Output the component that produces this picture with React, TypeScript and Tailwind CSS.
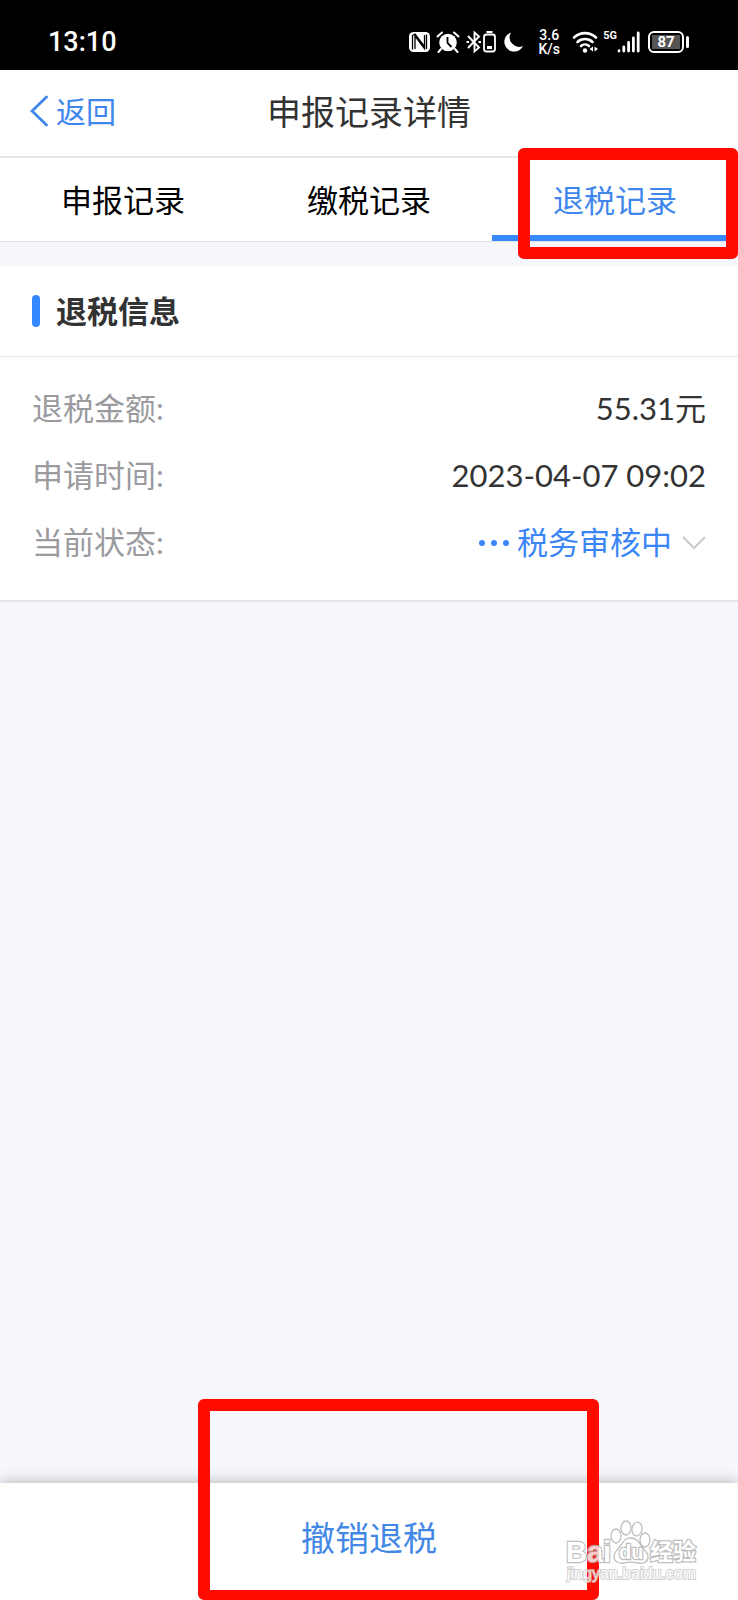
import {useState} from "react";
import {twMerge} from "tailwind-merge";

const tabs = ["申报记录", "缴税记录", "退税记录"];

function StatusIcons() {
    return (
        <div className="flex items-center text-white">
            <svg width="21" height="22" viewBox="0 0 21 22" aria-hidden="true">
                <rect x="0" y="1" width="21" height="20" rx="4.5" fill="white"/>
                <path d="M6 18V5l9.5 12.5V4M3.5 18.5v-14L6 3l9.5 12.5M17.5 3.5V18" fill="none" stroke="black" strokeWidth="1.3"/>
            </svg>
            <svg className="ml-1.5" width="24" height="22" viewBox="0 0 24 22" aria-hidden="true">
                <circle cx="12" cy="11.5" r="8.8" fill="white"/>
                <path d="M1.5 5.5 6 1.5M22.5 5.5 18 1.5M5 18l-2.5 3M19 18l2.5 3" stroke="white" strokeWidth="2" strokeLinecap="round"/>
                <path d="M11.5 6v6l4 4" fill="none" stroke="black" strokeWidth="1.8"/>
            </svg>
            <svg className="ml-1.5" width="31" height="24" viewBox="0 0 31 24" fill="none" stroke="white" aria-hidden="true">
                <path d="M2 6 13 17.5l-4.5 4v-19l4.5 4L2 18" strokeWidth="1.9"/>
                <path d="M.5 12H3M12.5 12H15" strokeWidth="2"/>
                <rect x="18" y="4.5" width="11" height="17" rx="2.5" strokeWidth="1.8"/>
                <path d="M20.5 2h6" strokeWidth="2"/>
                <path d="M21 17.5h5" strokeWidth="3"/>
            </svg>
            <svg className="ml-1.5" width="21" height="22" viewBox="0 0 21 22" aria-hidden="true">
                <path d="M8 1.500a9.800 9.800 0 1 0 12 13.500A9.500 9.500 0 0 1 8 1.500z" fill="white"/>
            </svg>
            <div className="ml-3 w-[26px] text-center text-[14px] leading-[14px] font-medium">
                <p>3.6</p>
                <p>K/s</p>
            </div>
            <svg className="ml-2.5" width="27" height="22" viewBox="0 0 27 22" fill="none" stroke="white" aria-hidden="true">
                <path d="M2 6.5a16 16 0 0 1 22 0M5.5 11a11 11 0 0 1 15 0M9 15a6 6 0 0 1 8 0" strokeWidth="2.6" strokeLinecap="round"/>
                <circle cx="13" cy="19.5" r="2.2" fill="white" stroke="none"/>
                <path d="M21 15.5v5L17.5 18zM22.5 15.5v5L26 18z" fill="white" stroke="none"/>
            </svg>
            <span className="ml-1 self-start text-[11px] leading-[16px] font-bold">5G</span>
            <svg width="23" height="22" viewBox="0 0 23 22" stroke="white" strokeWidth="2.8" strokeLinecap="round" aria-hidden="true">
                <path d="M2 19.7v.3M6.8 16v4M11.6 11.5V20M16.4 7v13M21.2 2v18"/>
            </svg>
            <div className="ml-2 flex items-center gap-0.5">
                <span className="flex h-[22px] w-9 items-center justify-center rounded-md border-2 border-white p-0.5">
                    <span className="flex h-[14px] w-full items-center justify-center bg-[#555] text-[15px] leading-[14px] font-bold">87</span>
                </span>
                <span className="h-3 w-[3px] rounded-sm bg-white"/>
            </div>
        </div>
    )
}

function Watermark() {
    return (
        <svg className="absolute right-9 bottom-3 opacity-80" width="138" height="68" viewBox="0 0 138 68" fill="white" stroke="#b0b0b0" strokeWidth="1.3" fontFamily="Liberation Sans, sans-serif" aria-hidden="true">
            <text x="2" y="42" fontSize="29" fontWeight="bold" strokeWidth="2.4" paintOrder="stroke">Bai</text>
            <text x="86" y="40" fontSize="23" fontWeight="bold" strokeWidth="2.4" paintOrder="stroke" fontFamily="Noto Sans CJK SC, sans-serif">经验</text>
            <text x="3" y="59" fontSize="16" strokeWidth="1.8" stroke="#c4c4c4" paintOrder="stroke">jingyan.baidu.com</text>
            <ellipse cx="52" cy="16" rx="5" ry="7"/>
            <ellipse cx="62" cy="8" rx="5" ry="7"/>
            <ellipse cx="73" cy="9" rx="5" ry="7" transform="rotate(8 73 9)"/>
            <ellipse cx="81" cy="20" rx="5" ry="7"/>
            <path d="M67 18c6 0 8 5 11 9s7 6 6 11-6 6-10 5-10-1-14 0-10-1-10-6 4-8 7-12 4-7 10-7z"/>
            <text x="55" y="39" fontSize="20" fontWeight="bold" strokeWidth="2.4" paintOrder="stroke">du</text>
        </svg>
    )
}

export default function App() {
    const [active, setActive] = useState(2)

    return (
        <div className="relative flex min-h-screen flex-col bg-[#f5f7fc] font-['Lato','Noto_Sans_CJK_SC',sans-serif] text-[#333]">
            <div className="flex h-[70px] items-center justify-between bg-black pt-[14px] pr-[49px] pl-12 font-['Roboto',sans-serif]">
                <span className="text-[27px] font-medium text-white">13:10</span>
                <StatusIcons/>
            </div>

            <header className="grid h-[88px] grid-cols-[1fr_auto_1fr] items-center border-b-2 border-[#e5e5e5] bg-white px-[30px] pb-1">
                <button className="flex items-center gap-2 text-[30px] text-[#3f87ec]">
                    <svg width="18" height="32" viewBox="0 0 18 32" fill="none" stroke="currentColor" strokeWidth="2.8" strokeLinecap="round" aria-hidden="true">
                        <path d="M16.5 2 2 16l14.5 14"/>
                    </svg>
                    返回
                </button>
                <h1 className="text-[34px]">申报记录详情</h1>
            </header>

            <nav className="relative grid h-[84px] grid-cols-3 border-b border-[#e0e1e6] bg-white">
                {tabs.map((tab, i) => (
                    <button
                        key={tab}
                        onClick={() => setActive(i)}
                        className={twMerge("border-t-8 border-b-6 border-transparent text-[31px] text-black", active === i ? "border-b-[#3889fc] text-[#3f87ec]" : "")}
                    >
                        {tab}
                    </button>
                ))}
                <span className="pointer-events-none absolute -top-2.5 right-0 h-[111px] w-[220px] rounded-md border-12 border-[#ff0b00]"/>
            </nav>

            <section className="mt-6 border-b-2 border-[#e2e3e7] bg-white">
                <div className="flex h-[91px] items-center gap-4 border-b border-[#e6e6e6] px-8">
                    <span className="h-8 w-2 rounded-full bg-[#3388ff]"/>
                    <h2 className="text-[31px] font-bold">退税信息</h2>
                </div>
                <dl className="px-8 pt-[18px] pb-6 text-[31px]">
                    <div className="flex h-[67px] items-center justify-between">
                        <dt className="text-[#9b9b9f]">退税金额:</dt>
                        <dd>55.31元</dd>
                    </div>
                    <div className="flex h-[67px] items-center justify-between">
                        <dt className="text-[#9b9b9f]">申请时间:</dt>
                        <dd>2023-04-07 09:02</dd>
                    </div>
                    <div className="flex h-[67px] items-center justify-between">
                        <dt className="text-[#9b9b9f]">当前状态:</dt>
                        <dd>
                            <button className="flex items-center text-[#3b86f7]">
                                <svg className="mr-2" width="30" height="8" viewBox="0 0 30 8" fill="currentColor" aria-hidden="true">
                                    <circle cx="3" cy="4" r="3"/>
                                    <circle cx="15" cy="4" r="3"/>
                                    <circle cx="27" cy="4" r="3"/>
                                </svg>
                                税务审核中
                                <svg className="ml-2.5" width="24" height="14" viewBox="0 0 24 14" fill="none" stroke="#c8c8c8" strokeWidth="2" aria-hidden="true">
                                    <path d="m1 1 11 11L23 1"/>
                                </svg>
                            </button>
                        </dd>
                    </div>
                </dl>
            </section>

            <footer className="relative mt-auto flex h-[117px] justify-center bg-white pb-2 shadow-[0_0_14px_rgba(0,0,0,0.3)]">
                <button className="px-8 text-[34px] text-[#4488e6]">撤销退税</button>
                <span className="pointer-events-none absolute -top-[84px] left-[198px] h-[201px] w-[401px] rounded-md border-12 border-b-10 border-[#ff0b00]"/>
                <Watermark/>
            </footer>
        </div>
    )
}
